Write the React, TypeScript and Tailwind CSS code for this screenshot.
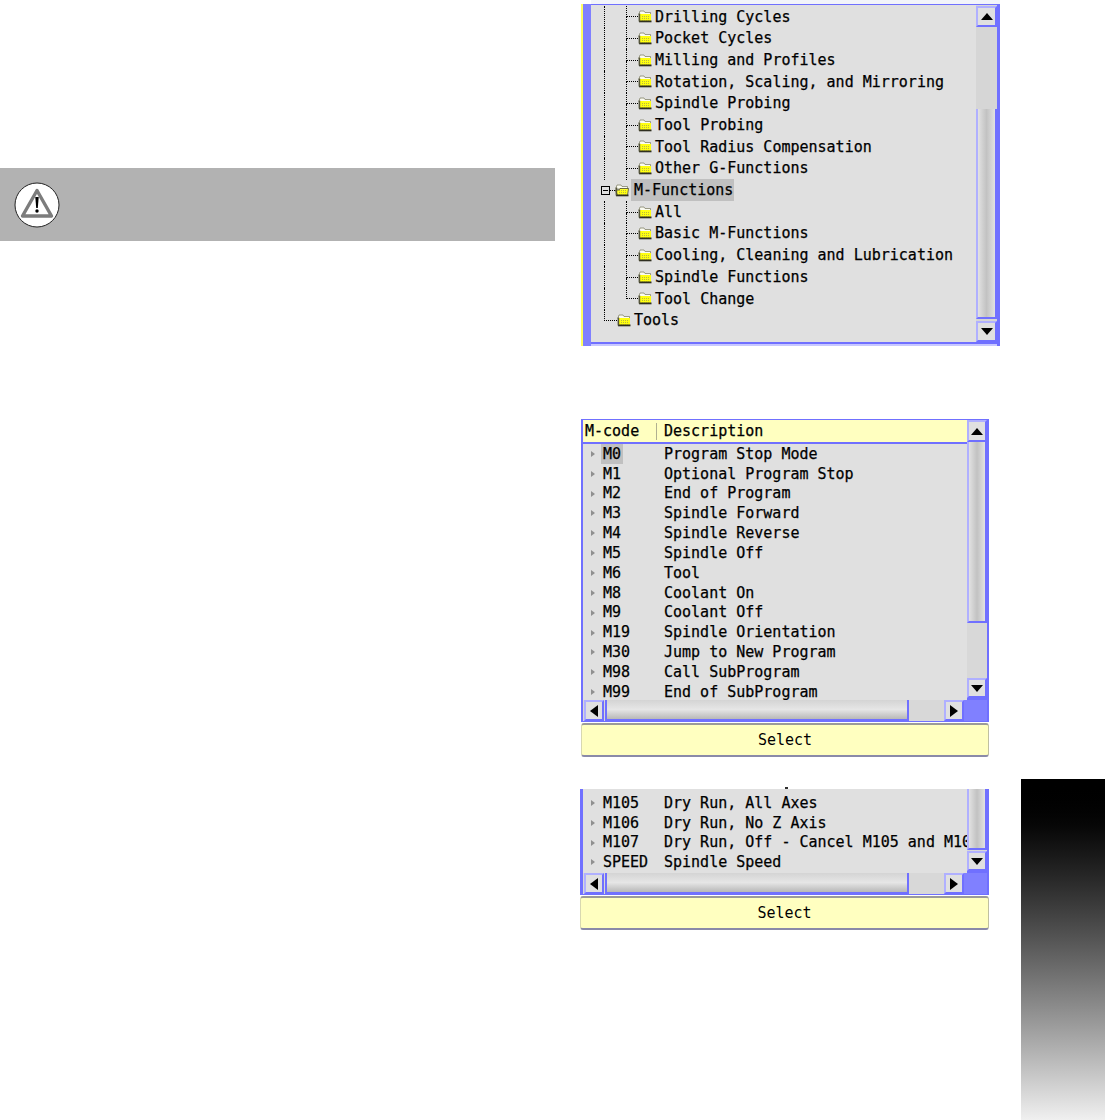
import React from 'react';

const folders1 = [
  'Drilling Cycles',
  'Pocket Cycles',
  'Milling and Profiles',
  'Rotation, Scaling, and Mirroring',
  'Spindle Probing',
  'Tool Probing',
  'Tool Radius Compensation',
  'Other G-Functions',
];

const folders2 = [
  'All',
  'Basic M-Functions',
  'Cooling, Cleaning and Lubrication',
  'Spindle Functions',
  'Tool Change',
];

const mcodes = [
  ['M0', 'Program Stop Mode'],
  ['M1', 'Optional Program Stop'],
  ['M2', 'End of Program'],
  ['M3', 'Spindle Forward'],
  ['M4', 'Spindle Reverse'],
  ['M5', 'Spindle Off'],
  ['M6', 'Tool'],
  ['M8', 'Coolant On'],
  ['M9', 'Coolant Off'],
  ['M19', 'Spindle Orientation'],
  ['M30', 'Jump to New Program'],
  ['M98', 'Call SubProgram'],
  ['M99', 'End of SubProgram'],
];

const mcodesEnd = [
  ['M105', 'Dry Run, All Axes'],
  ['M106', 'Dry Run, No Z Axis'],
  ['M107', 'Dry Run, Off - Cancel M105 and M106'],
  ['SPEED', 'Spindle Speed'],
];

const FolderIcon = ({ open = false }: { open?: boolean }) => (
  <svg width="14" height="13" viewBox="0 0 14 13" className="shrink-0">
    <defs>
      <pattern id="dither" width="2" height="2" patternUnits="userSpaceOnUse">
        <rect width="2" height="2" fill="#ffff10" />
        <rect width="1" height="1" fill="#b8b840" />
      </pattern>
    </defs>
    <path d="M1 4 L2 1 H6 L7 2.5 H12.5 V5 H1 Z" fill="#fbfbf0" stroke="#77775c" strokeWidth="0.7" />
    {open ? (
      <path d="M0.5 6 H4 L5 4.5 H13.5 L12.5 11.5 H2.5 Z" fill="#ffff30" stroke="#4a4a30" strokeWidth="0.8" />
    ) : (
      <rect x="1" y="4" width="12" height="7" fill="#ffff10" />
    )}
    <rect x="4" y="6" width="8" height="4.5" fill="url(#dither)" />
    <rect x="1" y="10.5" width="12.5" height="1.8" fill="#2e2e20" />
    <rect x="0.6" y="3.5" width="1.6" height="8" fill="#55553a" />
  </svg>
);

const Triangle = ({ dir }: { dir: 'up' | 'down' | 'left' | 'right' }) => {
  const pts = {
    up: '0,8 12,8 6,1',
    down: '0,1 12,1 6,8',
    left: '9,0 9,12 1,6',
    right: '1,0 1,12 9,6',
  }[dir];
  const vertical = dir === 'up' || dir === 'down';
  return (
    <svg width={vertical ? 12 : 10} height={vertical ? 9 : 12} viewBox={vertical ? '0 0 12 9' : '0 0 10 12'}>
      <polygon points={pts} fill="#000" />
    </svg>
  );
};

const ScrollButton = ({ dir, className }: { dir: 'up' | 'down' | 'left' | 'right'; className: string }) => (
  <div
    className={`flex shrink-0 items-center justify-center border-2 border-t-[#b0b0ff] border-l-[#b0b0ff] border-r-[#7070ff] border-b-[#7070ff] bg-[#e0e0e0] ${className}`}
  >
    <Triangle dir={dir} />
  </div>
);

const VThumb = ({ className }: { className: string }) => (
  <div
    className={`shrink-0 border-l-2 border-r-2 border-b-2 border-l-[#b0b0ff] border-r-[#7070ff] border-b-[#7070ff] bg-gradient-to-r from-[#e2e2e2] via-[#c2c2c2] to-[#e2e2e2] ${className}`}
  />
);

const HBar = () => (
  <div className="flex h-[21px] shrink-0 items-stretch bg-[#d8d8d8]">
    <ScrollButton dir="left" className="ml-px w-[20px]" />
    <div className="ml-px w-[304px] border-r-2 border-b-2 border-l-2 border-l-[#7070ff] border-r-[#7070ff] border-b-[#7070ff] bg-gradient-to-b from-[#d4d4d4] via-[#e6e6e6] to-[#b8b8b8]" />
    <div className="flex-1" />
    <ScrollButton dir="right" className="w-[20px]" />
    <div className="w-[23px] bg-[#8080ff]" />
  </div>
);

const SelectButton = () => (
  <div className="mt-px flex h-[34px] items-center justify-center rounded-[3px] border-t-2 border-b-2 border-l border-r border-t-[#9a9a9a] border-b-[#8a8aa8] border-l-[#d8d8b0] border-r-[#c0c0a0] bg-[#ffffc0] pt-px text-[15px] text-black">
    Select
  </div>
);

const TreeBranch = ({ label, last }: { label: string; last?: boolean }) => (
  <div className="flex h-[21.7px] items-stretch">
    <div className="w-[22px] shrink-0 border-l border-dotted border-black" />
    <div className="flex w-[12px] shrink-0 flex-col">
      <div className="flex-1 border-b border-l border-dotted border-black" />
      <div className={`flex-1 ${last ? '' : 'border-l border-dotted border-black'}`} />
    </div>
    <div className="flex items-center">
      <FolderIcon />
      <span className="ml-[3px] whitespace-nowrap">{label}</span>
    </div>
  </div>
);

const TreePanel = () => (
  <div className="ml-px flex h-[346px] w-[419px] flex-col">
    <div className="ml-[10px] h-[4px] shrink-0 bg-[#f2f4fa]" />
    <div className="flex min-h-0 flex-1">
      <div className="w-[2px] bg-[#ffff60]" />
      <div className="w-[8px] bg-[#8080ff]" />
      <div className="flex min-w-0 flex-1 flex-col">
        <div className="flex min-h-0 flex-1 border-t border-[#7070ff]">
          <div className="flex-1 overflow-hidden bg-[#e0e0e0] pl-[13px] pt-px text-[15px] text-black [-webkit-text-stroke:0.25px_black]">
            {folders1.map((label) => (
              <TreeBranch key={label} label={label} />
            ))}
            <div className="flex h-[21.7px] items-stretch">
              <div className="flex w-[11px] shrink-0 items-center">
                <div className="relative z-10 -ml-[3px] flex h-[9px] w-[9px] shrink-0 items-center justify-center border border-black bg-[#e0e0e0]">
                  <div className="h-px w-[5px] bg-black" />
                </div>
                <div className="h-0 flex-1 border-t border-dotted border-black" />
              </div>
              <div className="flex items-center">
                <FolderIcon open />
                <span className="ml-[2px] flex h-[22px] w-[103px] items-center bg-[#c0c0c0] pl-[3px]">M-Functions</span>
              </div>
            </div>
            {folders2.map((label, i) => (
              <TreeBranch key={label} label={label} last={i === folders2.length - 1} />
            ))}
            <div className="flex h-[21.7px] items-stretch">
              <div className="flex w-[13px] shrink-0 flex-col">
                <div className="flex-1 border-b border-l border-dotted border-black" />
                <div className="flex-1" />
              </div>
              <div className="flex items-center">
                <FolderIcon />
                <span className="ml-[3px]">Tools</span>
              </div>
            </div>
          </div>
          <div className="flex w-[21px] flex-col bg-[#d6d6d6] pt-px">
            <ScrollButton dir="up" className="h-[21px] w-[21px]" />
            <div className="h-[82px] shrink-0" />
            <VThumb className="h-[210px]" />
            <ScrollButton dir="down" className="mt-[2px] h-[21px] w-[21px]" />
          </div>
        </div>
        <div className="h-[2px] shrink-0 bg-[#7070ff]" />
        <div className="h-[2px] shrink-0 bg-[#c8c8ff]" />
      </div>
      <div className="w-[3px] bg-[#7070ff]" />
    </div>
  </div>
);

const McodeRow = ({ code, desc, selected }: { code: string; desc: string; selected?: boolean }) => (
  <div className="flex h-[19.85px] shrink-0 items-center whitespace-nowrap">
    <svg width="4" height="6" viewBox="0 0 4 6" className="ml-[8px] shrink-0">
      <polygon points="0,0 4,3 0,6" fill="#909090" />
    </svg>
    <div className="w-[64px] shrink-0 pl-[8px]">
      <span className={selected ? '-mx-[2px] inline-block bg-[#c0c0c0] px-[2px] leading-[20px]' : ''}>{code}</span>
    </div>
    <span className="pl-[5px]">{desc}</span>
  </div>
);

const McodePanel = () => (
  <div className="ml-px mt-[73px] flex w-[408px] flex-col">
    <div className="border-t border-l-2 border-r-2 border-[#7070ff]">
      <div className="flex h-[280px] text-[15px] text-black [-webkit-text-stroke:0.25px_black]">
        <div className="flex min-w-0 flex-1 flex-col overflow-hidden bg-[#e0e0e0]">
          <div className="flex h-[24px] shrink-0 items-center border-b-2 border-[#7070ff] bg-[#ffffc0]">
            <span className="w-[73px] pl-[2px]">M-code</span>
            <span className="h-[17px] w-px bg-[#b0b090]" />
            <span className="pl-[7px]">Description</span>
          </div>
          {mcodes.map(([code, desc], i) => (
            <McodeRow key={code} code={code} desc={desc} selected={i === 0} />
          ))}
        </div>
        <div className="flex w-[20px] shrink-0 flex-col border-b-2 border-[#7070ff] bg-[#d8d8d8]">
          <ScrollButton dir="up" className="h-[22px] w-[20px]" />
          <VThumb className="h-[181px]" />
          <div className="flex-1" />
          <ScrollButton dir="down" className="h-[20px] w-[20px]" />
        </div>
      </div>
      <HBar />
    </div>
    <div className="h-[1px] bg-[#7070ff]" />
    <SelectButton />
  </div>
);

const McodeEndPanel = () => (
  <div className="mt-[30px] flex w-[409px] flex-col">
    <div className="flex h-[2px] pl-[205px]">
      <div className="h-[2px] w-[3px] bg-[#303030]" />
    </div>
    <div className="border-l-[3px] border-r-2 border-[#7070ff]">
      <div className="flex h-[84px] text-[15px] text-black [-webkit-text-stroke:0.25px_black]">
        <div className="flex min-w-0 flex-1 flex-col overflow-hidden bg-[#e0e0e0] pt-[4px]">
          {mcodesEnd.map(([code, desc]) => (
            <McodeRow key={code} code={code} desc={desc} />
          ))}
        </div>
        <div className="flex w-[20px] shrink-0 flex-col border-b-2 border-[#7070ff] bg-[#d8d8d8]">
          <VThumb className="h-[61px]" />
          <ScrollButton dir="down" className="mt-px h-[20px] w-[20px]" />
        </div>
      </div>
      <HBar />
    </div>
    <div className="h-[1px] bg-[#7070ff]" />
    <SelectButton />
  </div>
);

const WarningBar = () => (
  <div className="flex h-[73px] items-center bg-[#b2b2b2] pl-[14px]">
    <svg width="46" height="46" viewBox="0 0 46 46">
      <circle cx="23" cy="23" r="22" fill="#fff" stroke="#222" strokeWidth="1" />
      <path d="M23 8.5 L37.5 34 H8.5 Z" fill="#fff" stroke="#7c7c7c" strokeWidth="3.4" strokeLinejoin="round" />
      <path d="M21.3 15 H24.7 L23.8 26 H22.2 Z" fill="#000" />
      <circle cx="23" cy="29" r="1.7" fill="#000" />
    </svg>
  </div>
);

export default function App() {
  return (
    <div className="flex h-[1120px] w-[1105px] overflow-hidden bg-white [font-family:'DejaVu_Sans_Mono',monospace]">
      <div className="w-[555px] shrink-0 pt-[168px]">
        <WarningBar />
      </div>
      <div className="ml-[25px] w-[420px] shrink-0">
        <TreePanel />
        <McodePanel />
        <McodeEndPanel />
      </div>
      <div className="ml-auto w-[84px] shrink-0 pt-[779px]">
        <div className="h-full bg-gradient-to-b from-black to-[#f0f0f0]" />
      </div>
    </div>
  );
}
